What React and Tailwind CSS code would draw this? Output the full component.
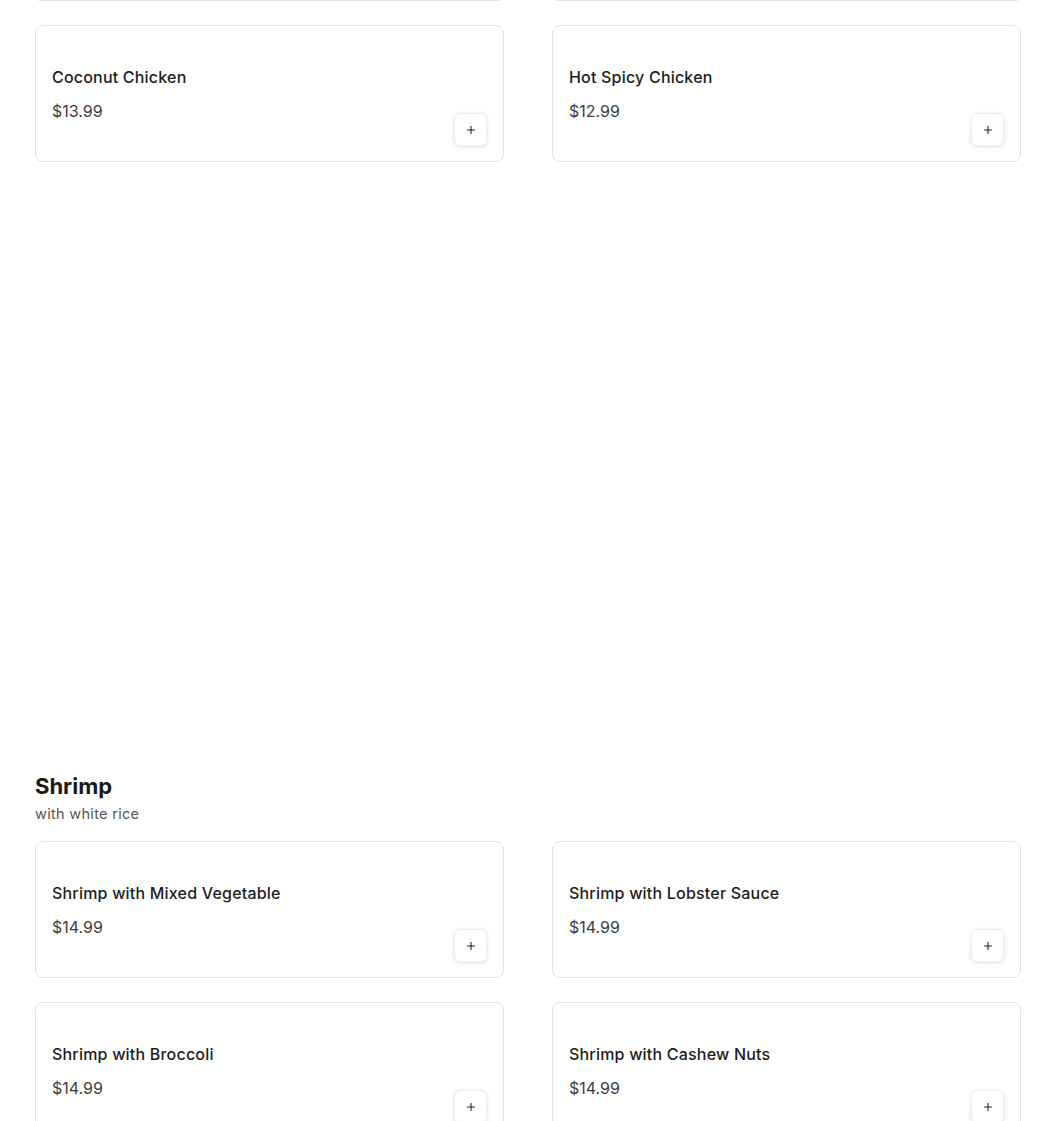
import { Plus } from "lucide-react";

const chicken = [
  { name: "Coconut Chicken", price: "$13.99" },
  { name: "Hot Spicy Chicken", price: "$12.99" },
];

const shrimp = [
  { name: "Shrimp with Mixed Vegetable", price: "$14.99" },
  { name: "Shrimp with Lobster Sauce", price: "$14.99" },
  { name: "Shrimp with Broccoli", price: "$14.99" },
  { name: "Shrimp with Cashew Nuts", price: "$14.99" },
];

function ItemCard({ name, price }) {
  return (
    <div className="w-[469px] h-[137px] rounded-[8px] border border-[#e3e3e3] bg-white px-4 pt-[38px] pb-[15px] flex items-end justify-between">
      <div className="flex flex-col gap-[10px] pb-[23px]">
        <p className="text-[16px] leading-6 font-medium text-[#1c1c1c] tracking-[0.2px]">{name}</p>
        <p className="text-[16px] leading-6 text-[#3d3d3d]">{price}</p>
      </div>
      <button className="w-[33px] h-[33px] rounded-[6px] bg-white border border-[#eeeeee] shadow-[0_1px_4px_rgba(0,0,0,0.12)] flex items-center justify-center text-[#222]">
        <Plus size={12} strokeWidth={2.2} />
      </button>
    </div>
  );
}

export default function App() {
  return (
    <div className="w-[1050px] bg-white pl-[35px] font-['Inter',sans-serif] overflow-hidden h-[1121px]">
      {/* tail of the card above */}
      <div className="flex gap-[48px]">
        <div className="w-[469px] px-[3px]"><div className="h-[2px] border-b border-x border-[#e3e3e3] rounded-b-[6px] -mt-[1px]" /></div>
        <div className="w-[469px] px-[3px]"><div className="h-[2px] border-b border-x border-[#e3e3e3] rounded-b-[6px] -mt-[1px]" /></div>
      </div>

      <div className="mt-[24px] grid grid-cols-[469px_469px] gap-x-[48px] gap-y-[24px]">
        {chicken.map((item) => (
          <ItemCard key={item.name} {...item} />
        ))}
      </div>

      <div className="mt-[610px]">
        <h2 className="text-[22px] leading-[28px] font-bold text-[#1a1a1a]">Shrimp</h2>
        <p className="text-[14.5px] leading-5 text-[#555] mt-[4px] tracking-[0.3px]">with white rice</p>
      </div>

      <div className="mt-[17px] grid grid-cols-[469px_469px] gap-x-[48px] gap-y-[24px]">
        {shrimp.map((item) => (
          <ItemCard key={item.name} {...item} />
        ))}
      </div>
    </div>
  );
}
